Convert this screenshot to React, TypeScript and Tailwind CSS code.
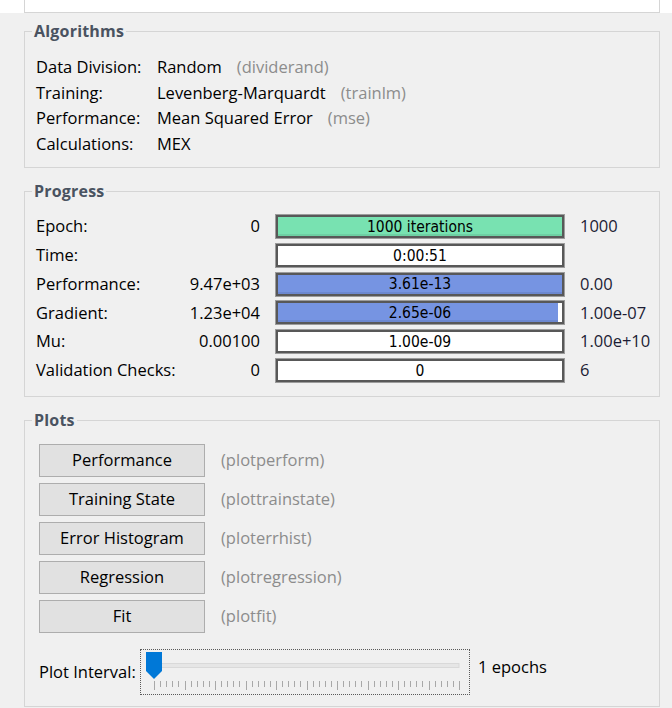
import React from 'react';

const uiFont = "font-['Open_Sans','Noto_Sans',sans-serif]";
const barFont = "font-['DejaVu_Sans_Condensed','DejaVu_Sans',sans-serif] font-stretch-condensed";

const algorithms = [
    { label: 'Data Division:', value: 'Random', fn: '(dividerand)' },
    { label: 'Training:', value: 'Levenberg-Marquardt', fn: '(trainlm)' },
    { label: 'Performance:', value: 'Mean Squared Error', fn: '(mse)' },
    { label: 'Calculations:', value: 'MEX', fn: '' },
];

type ProgressRow = {
    label: string;
    start: string;
    text: string;
    end: string;
    fill?: 'green' | 'blue';
    pct?: number;
};

const progress: ProgressRow[] = [
    { label: 'Epoch:', start: '0', text: '1000 iterations', end: '1000', fill: 'green', pct: 100 },
    { label: 'Time:', start: '', text: '0:00:51', end: '' },
    { label: 'Performance:', start: '9.47e+03', text: '3.61e-13', end: '0.00', fill: 'blue', pct: 100 },
    { label: 'Gradient:', start: '1.23e+04', text: '2.65e-06', end: '1.00e-07', fill: 'blue', pct: 98.6 },
    { label: 'Mu:', start: '0.00100', text: '1.00e-09', end: '1.00e+10' },
    { label: 'Validation Checks:', start: '0', text: '0', end: '6' },
];

const plots = [
    { name: 'Performance', fn: '(plotperform)' },
    { name: 'Training State', fn: '(plottrainstate)' },
    { name: 'Error Histogram', fn: '(ploterrhist)' },
    { name: 'Regression', fn: '(plotregression)' },
    { name: 'Fit', fn: '(plotfit)' },
];

function GroupBox({ title, className, children }: { title: string; className: string; children: React.ReactNode }) {
    return (
        <div className={`relative ml-[24px] w-[636px] border border-[#d5d5d5] ${className}`}>
            <span className="absolute -top-[12px] left-[7px] bg-[#f0f0f0] px-[2px] text-[16px] leading-[22px] font-bold tracking-[0.2px] text-[#4a5361]">
                {title}
            </span>
            {children}
        </div>
    );
}

function Bar({ row }: { row: ProgressRow }) {
    const fillColor = row.fill === 'green' ? 'bg-[#78e2b1]' : 'bg-[#7694e2]';
    return (
        <div className="h-[25px] border border-[#9c9c9c]">
            <div className="relative h-full border-2 border-[#585858] bg-white">
                {row.fill && (
                    <div
                        className={`absolute inset-y-0 left-0 ${fillColor} shadow-[inset_0_-2px_0_rgba(0,0,0,0.08)]`}
                        style={{ width: `${row.pct}%` }}
                    />
                )}
                <div className={`relative flex h-full items-center justify-center pt-[2px] text-[15.5px] leading-none text-black ${barFont}`}>
                    {row.text}
                </div>
            </div>
        </div>
    );
}

function Slider() {
    const ticks = Array.from({ length: 51 }, (_, i) => i);
    return (
        <div className="h-[46px] w-[330px] border border-dotted border-[#5a5a5a]">
            <svg width="328" height="44" viewBox="0 0 328 44">
                {/* track */}
                <rect x="13" y="13.5" width="305" height="4" fill="#e6e6e6" stroke="#d9d9d9" strokeWidth="1" />
                {/* tick marks */}
                {ticks.map((i) => {
                    const x = Math.round(13 + i * 6.1) + 0.5;
                    const major = i % 5 === 0;
                    return (
                        <line key={i} x1={x} x2={x} y1={31} y2={major ? 40 : 37} stroke="#a8a8a8" strokeWidth="1" />
                    );
                })}
                {/* thumb */}
                <path d="M5 2 H21 V21 L13 29 L5 21 Z" fill="#0078d7" />
            </svg>
        </div>
    );
}

export default function App() {
    return (
        <div className={`h-[708px] w-[672px] overflow-hidden bg-[#f0f0f0] text-[16.5px] text-black ${uiFont}`}>
            {/* tail of the panel above */}
            <div className="h-[13px] bg-white">
                <div className="ml-[24px] h-[13px] w-[636px] border-x border-b border-[#d5d5d5]" />
            </div>

            <GroupBox title="Algorithms" className="mt-[18px] h-[137px]">
                <div className="pl-[11px] pt-[22px] leading-[25.6px]">
                    {algorithms.map((a) => (
                        <div key={a.label} className="flex">
                            <span className="w-[121px]">{a.label}</span>
                            <span>{a.value}</span>
                            {a.fn && <span className="ml-[15px] text-[#8c8c8c]">{a.fn}</span>}
                        </div>
                    ))}
                </div>
            </GroupBox>

            <GroupBox title="Progress" className="mt-[23px] h-[206px]">
                <div className="grid grid-cols-[224px_290px_1fr] gap-x-[15px] gap-y-[3.8px] pl-[11px] pt-[22px]">
                    {progress.map((row) => (
                        <React.Fragment key={row.label}>
                            <div className="flex h-[25px] items-center justify-between">
                                <span>{row.label}</span>
                                <span>{row.start}</span>
                            </div>
                            <Bar row={row} />
                            <div className="flex h-[25px] items-center text-[#1c1c34]">{row.end}</div>
                        </React.Fragment>
                    ))}
                </div>
            </GroupBox>

            <GroupBox title="Plots" className="mt-[23px] h-[287px]">
                <div className="flex flex-col gap-[6px] pl-[14px] pt-[23px]">
                    {plots.map((p) => (
                        <div key={p.name} className="flex items-center">
                            <button className="h-[33px] w-[166px] border border-[#adadad] bg-[#e1e1e1] text-black">
                                {p.name}
                            </button>
                            <span className="ml-[16px] text-[#8c8c8c]">{p.fn}</span>
                        </div>
                    ))}
                </div>
                <div className="mt-[16px] flex items-center pl-[14px]">
                    <span className="w-[101px]">Plot Interval:</span>
                    <Slider />
                    <span className="mb-[10px] ml-[8px]">1 epochs</span>
                </div>
            </GroupBox>
        </div>
    );
}
